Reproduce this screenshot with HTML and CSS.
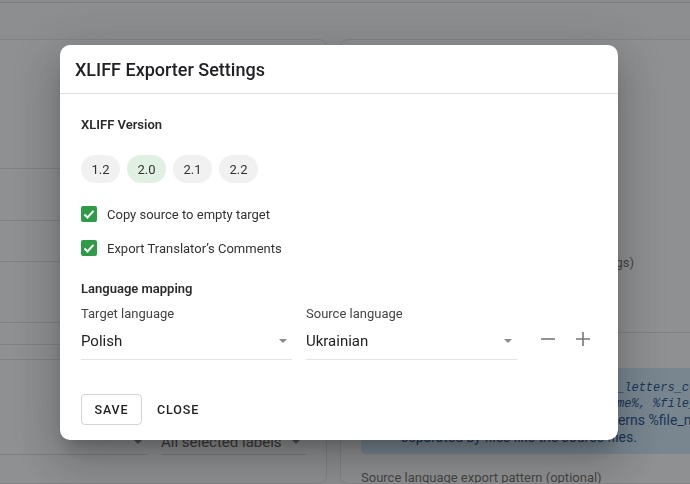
FILE: index.html
```html
<!DOCTYPE html>
<html lang="en">
<head>
  <meta charset="UTF-8" />
  <meta name="viewport" content="width=device-width, initial-scale=1.0"/>
  <title>XLIFF Exporter Settings</title>
  <link rel="stylesheet" href="styles.css">
</head>
<body>
  <div class="page">
    <div class="topbar"></div>
    <div class="cards">
      <div class="card card-left">
        <div class="row" style="height:128px"></div>
        <div class="row" style="height:51px"></div>
        <div class="row" style="height:40px"></div>
        <div class="row" style="height:60px"></div>
        <div class="row" style="height:21px"></div>
        <div class="row" style="height:14px"></div>
        <div class="filters">
          <div class="bg-select bg-select-a"><span></span><i class="bg-arrow"></i></div>
          <div class="bg-select bg-select-b"><span>All selected labels</span><i class="bg-arrow"></i></div>
        </div>
      </div>
      <div class="card card-right">
        <div class="split-note">Split files by languages (not by settings)</div>
        <div class="info">
          <div class="mono">%language%, %osx_locale%, %two_letters_code%</div>
          <div class="mono">%original_file_name%, %file_name%, %file_name%</div>
          <div class="info-line">You can use translation export patterns %file_name% to get files</div>
          <div class="info-line">separated by files like the source files.</div>
        </div>
        <div class="bg-label">Source language export pattern (optional)</div>
      </div>
    </div>
  </div>

  <div class="overlay">
    <div class="dialog">
      <div class="dialog-title">XLIFF Exporter Settings</div>
      <div class="dialog-body">
        <div class="section-title">XLIFF Version</div>
        <div class="chips">
          <span class="chip">1.2</span>
          <span class="chip chip-active">2.0</span>
          <span class="chip">2.1</span>
          <span class="chip">2.2</span>
        </div>

        <label class="check">
          <span class="check-box">
            <svg viewBox="0 0 16 16" width="16" height="16"><polyline points="3.5,8.5 6.5,11.5 12.5,4.8" fill="none" stroke="#fff" stroke-width="2"/></svg>
          </span>
          Copy source to empty target
        </label>
        <label class="check">
          <span class="check-box">
            <svg viewBox="0 0 16 16" width="16" height="16"><polyline points="3.5,8.5 6.5,11.5 12.5,4.8" fill="none" stroke="#fff" stroke-width="2"/></svg>
          </span>
          Export Translator’s Comments
        </label>

        <div class="section-title mapping-title">Language mapping</div>
        <div class="mapping">
          <div class="field">
            <div class="field-label">Target language</div>
            <div class="select"><span>Polish</span><i class="arrow"></i></div>
          </div>
          <div class="field">
            <div class="field-label">Source language</div>
            <div class="select"><span>Ukrainian</span><i class="arrow"></i></div>
          </div>
          <div class="icon-btns">
            <button class="icon-btn" aria-label="Remove">
              <svg viewBox="0 0 24 24" width="24" height="24"><path d="M5 12h14" stroke="#777" stroke-width="1.6"/></svg>
            </button>
            <button class="icon-btn" aria-label="Add">
              <svg viewBox="0 0 24 24" width="24" height="24"><path d="M5 12h14M12 5v14" stroke="#777" stroke-width="1.6"/></svg>
            </button>
          </div>
        </div>
      </div>
      <div class="dialog-actions">
        <button class="btn btn-outlined">SAVE</button>
        <button class="btn btn-text">CLOSE</button>
      </div>
    </div>
  </div>
</body>
</html>
```

FILE: styles.css
```css
body {
  margin: 0;
  width: 690px;
  height: 484px;
  overflow: hidden;
  font-family: Roboto, "Liberation Sans", sans-serif;
  background: #e8ebed;
  color: #222;
}

/* background page */
.page {
  height: 484px;
  overflow: hidden;
}

.topbar {
  height: 2px;
  border-bottom: 1px solid #c9cdd0;
  background: #e2e5e7;
}

.cards {
  display: flex;
  gap: 13px;
  margin-top: 36px;
  margin-left: -10px;
}

.card {
  border: 1px solid #d3d7da;
  border-radius: 8px;
  background: #eceef0;
  height: 445px;
  box-sizing: border-box;
  overflow: hidden;
}

.card-left {
  width: 337px;
  flex-shrink: 0;
}

.card-right {
  flex: 1;
  min-width: 0;
  margin-right: -20px;
  padding-left: 20px;
}

.row {
  border-bottom: 1px solid #d0d4d7;
}

.filters {
  display: flex;
  gap: 13px;
  padding-top: 70px;
}

.bg-select {
  display: flex;
  align-items: center;
  justify-content: space-between;
  height: 24px;
  border-bottom: 1px solid #c7cbce;
  font-size: 15px;
  color: #555;
}

.bg-select-a {
  width: 157px;
}

.bg-select-b {
  width: 145px;
}

.bg-arrow {
  width: 0;
  height: 0;
  border-left: 4px solid transparent;
  border-right: 4px solid transparent;
  border-top: 4px solid #777;
  margin-right: 6px;
}

.split-note {
  margin: 215px 0 35px -20px;
  padding: 0 75px 62px 20px;
  text-align: right;
  font-size: 13px;
  color: #666;
  border-bottom: 1px solid #d0d4d7;
}

.info {
  background: #c4dcee;
  border-radius: 4px;
  height: 86px;
  padding: 12px 0 0 40px;
  box-sizing: border-box;
  color: #154a85;
  font-size: 14px;
  white-space: nowrap;
  overflow: hidden;
}

.mono {
  font-family: "Liberation Mono", monospace;
  font-style: italic;
  font-size: 12px;
  line-height: 16px;
}

.info-line {
  line-height: 17px;
}

.bg-label {
  margin-top: 16px;
  font-size: 13px;
  color: #666;
}

/* dialog */
.overlay {
  position: fixed;
  inset: 0;
  background: rgba(33, 33, 33, 0.46);
}

.dialog {
  margin: 45px 0 0 60px;
  width: 558px;
  height: 395px;
  background: #fff;
  border-radius: 10px;
  box-shadow: 0 11px 15px -7px rgba(0,0,0,0.2), 0 24px 38px 3px rgba(0,0,0,0.14), 0 9px 46px 8px rgba(0,0,0,0.12);
  display: flex;
  flex-direction: column;
}

.dialog-title {
  height: 49px;
  box-sizing: border-box;
  padding: 0 15px;
  display: flex;
  align-items: center;
  font-size: 18px;
  font-weight: 500;
  color: #202124;
  border-bottom: 1px solid #dedede;
}

.dialog-body {
  flex: 1;
  padding: 22px 21px 0;
}

.section-title {
  font-size: 13px;
  font-weight: 600;
  line-height: 18px;
  color: #2b2b2b;
}

.chips {
  display: flex;
  gap: 7px;
  margin-top: 21px;
  margin-bottom: 19px;
}

.chip {
  display: inline-flex;
  align-items: center;
  justify-content: center;
  width: 39px;
  height: 28px;
  border-radius: 14px;
  background: #f0f1f0;
  font-size: 13px;
  color: #333;
}

.chip-active {
  background: #e0f0e2;
}

.check {
  display: flex;
  align-items: center;
  gap: 10px;
  height: 24px;
  font-size: 13px;
  color: #333;
  margin-bottom: 10px;
}

.check-box {
  width: 16px;
  height: 16px;
  border-radius: 2px;
  background: #2f9a47;
  display: flex;
}

.mapping-title {
  margin-top: 20px;
}

.mapping {
  display: flex;
  gap: 14px;
  margin-top: 7px;
}

.field {
  width: 211px;
}

.field-label {
  font-size: 13px;
  line-height: 18px;
  color: #444;
}

.select {
  margin-top: 4px;
  height: 33px;
  box-sizing: border-box;
  padding-bottom: 4px;
  border-bottom: 1px solid #e4e4e4;
  display: flex;
  align-items: center;
  justify-content: space-between;
  font-size: 15px;
  color: #222;
}

.arrow {
  width: 0;
  height: 0;
  border-left: 4px solid transparent;
  border-right: 4px solid transparent;
  border-top: 4px solid #8a8a8a;
  margin-right: 5px;
}

.icon-btns {
  display: flex;
  gap: 11px;
  padding-left: 5px;
  margin-top: 22px;
}

.icon-btn {
  width: 24px;
  height: 24px;
  padding: 0;
  border: none;
  background: none;
  display: flex;
}

.dialog-actions {
  display: flex;
  align-items: center;
  padding: 0 21px 15px;
}

.btn {
  height: 31px;
  font-family: Roboto, "Liberation Sans", sans-serif;
  font-size: 12.5px;
  font-weight: 500;
  letter-spacing: 0.9px;
  color: #222;
  background: none;
  border-radius: 4px;
}

.btn-outlined {
  width: 61px;
  border: 1px solid #d4d4d4;
}

.btn-text {
  border: none;
  padding: 0 15px;
}
```
